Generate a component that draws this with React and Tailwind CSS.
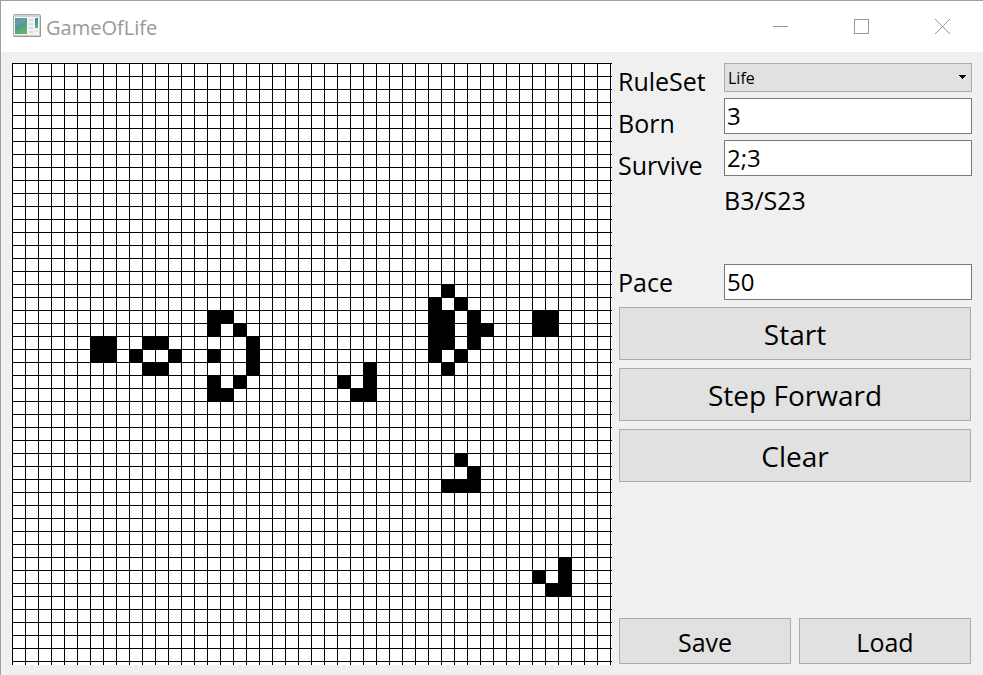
import React, { useState } from "react";

const CELL = 13;

// Live cells, listed per row as [row, [columns]].
const LIVE_ROWS = [
  [17, [33]],
  [18, [32, 34]],
  [19, [15, 16, 32, 33, 35, 40, 41]],
  [20, [15, 17, 32, 33, 35, 36, 40, 41]],
  [21, [6, 7, 10, 11, 18, 32, 33, 35]],
  [22, [6, 7, 9, 12, 15, 18, 32, 34]],
  [23, [10, 11, 18, 27, 33]],
  [24, [15, 17, 25, 27]],
  [25, [15, 16, 26, 27]],
  [30, [34]],
  [31, [35]],
  [32, [33, 34, 35]],
  [38, [42]],
  [39, [40, 42]],
  [40, [41, 42]],
];

function Board() {
  return (
    <svg
      role="img"
      aria-label="Game board"
      className="block min-w-0 flex-1 self-stretch bg-white"
      shapeRendering="crispEdges"
    >
      <defs>
        <pattern id="grid" width={CELL} height={CELL} patternUnits="userSpaceOnUse">
          <rect width={CELL} height="1" fill="#000" />
          <rect width="1" height={CELL} fill="#000" />
        </pattern>
      </defs>
      <rect width="100%" height="100%" fill="url(#grid)" />
      {LIVE_ROWS.flatMap(([row, cols]) =>
        cols.map((col) => (
          <rect
            key={`${row}-${col}`}
            x={col * CELL}
            y={row * CELL}
            width={CELL + 1}
            height={CELL + 1}
            fill="#000"
          />
        ))
      )}
    </svg>
  );
}

function AppIcon() {
  return (
    <svg className="mb-0.5" width="28" height="23" viewBox="0 0 28 23" aria-hidden="true">
      <defs>
        <linearGradient id="frame" x1="0" y1="0" x2="0" y2="1">
          <stop offset="0" stopColor="#c6c8ca" />
          <stop offset="0.18" stopColor="#dcdedf" />
          <stop offset="1" stopColor="#cfcfd1" />
        </linearGradient>
        <linearGradient id="pane" x1="0" y1="0" x2="0.5" y2="1">
          <stop offset="0" stopColor="#4a80ac" />
          <stop offset="0.5" stopColor="#509892" />
          <stop offset="1" stopColor="#68b26c" />
        </linearGradient>
      </defs>
      <rect x="0.5" y="0.5" width="27" height="22" rx="1" fill="url(#frame)" stroke="#acaeb0" />
      <path d="M1 22.5h26.5V2" fill="none" stroke="#97989a" />
      <rect x="1" y="3" width="25" height="18" fill="#f2f3f3" />
      <rect x="2" y="4" width="12" height="16" fill="url(#pane)" />
      <path d="M2 12C7 11 11 9 14 5V4H2z" fill="#fff" opacity="0.12" />
      <path d="M16 6h4M16 10h4M16 14h4M16 18h4" stroke="#dcdcde" strokeWidth="2" />
      <rect x="22" y="4" width="3" height="10" fill="url(#pane)" />
      <path d="M22 17h3" stroke="#e2e2e4" strokeWidth="2" />
    </svg>
  );
}

function CaptionButton({ label, children }) {
  return (
    <button type="button" aria-label={label} className="flex w-[81px] items-center justify-center self-stretch">
      <svg width="17" height="17" viewBox="0 0 17 17" fill="none" stroke="#999" aria-hidden="true">
        {children}
      </svg>
    </button>
  );
}

function TitleBar() {
  return (
    <header className="flex h-[51px] items-center bg-white pl-3">
      <AppIcon />
      <h1 className="ml-[5px] flex-1 pt-0.5 text-[20px] leading-[28px] text-[#999]">GameOfLife</h1>
      <CaptionButton label="Minimize">
        <path d="M1 8.5h15" />
      </CaptionButton>
      <CaptionButton label="Maximize">
        <rect x="1.5" y="1.5" width="14" height="14" />
      </CaptionButton>
      <CaptionButton label="Close">
        <path d="M1 1l15 15M16 1L1 16" />
      </CaptionButton>
    </header>
  );
}

function TextField({ id, value, onChange }) {
  return (
    <input
      id={id}
      type="text"
      value={value}
      onChange={(e) => onChange(e.target.value)}
      className="block h-[36px] w-full border border-[#7a7a7a] bg-white px-0.5 pb-0.5 text-[24px] leading-[32px] outline-none"
    />
  );
}

const BUTTON = "border border-[#adadad] bg-[#e1e1e1] pt-0.5";

export default function App() {
  const [born, setBorn] = useState("3");
  const [survive, setSurvive] = useState("2;3");
  const [pace, setPace] = useState("50");

  return (
    <div className="flex min-h-screen flex-col border-t border-l border-[#a0a0a0] bg-[#f0f0f0] font-['Segoe_UI','Open_Sans','Noto_Sans',sans-serif] text-black">
      <TitleBar />
      <main className="flex flex-1 gap-[6px] px-[11px] pt-[11px] pb-[10px]">
        <Board />
        <aside className="flex w-[354px] shrink-0 flex-col">
          <div className="flex">
            <div className="flex w-[106px] flex-col gap-[6px] text-[25px] leading-[36px]">
              <label htmlFor="ruleset">RuleSet</label>
              <label htmlFor="born">Born</label>
              <label htmlFor="survive">Survive</label>
            </div>
            <div className="flex min-w-0 flex-1 flex-col gap-[6px]">
              <div className="relative">
                <select
                  id="ruleset"
                  className="block h-[29px] w-full appearance-none border border-[#adadad] bg-[#e1e1e1] px-[3px] text-[16px] outline-none"
                >
                  <option>Life</option>
                </select>
                <svg
                  className="pointer-events-none absolute top-[12px] right-[6px]"
                  width="7"
                  height="4"
                  viewBox="0 0 7 4"
                  shapeRendering="crispEdges"
                  aria-hidden="true"
                >
                  <path d="M0 0h7v1H6v1H5v1H4v1H3V3H2V2H1V1H0z" />
                </svg>
              </div>
              <TextField id="born" value={born} onChange={setBorn} />
              <TextField id="survive" value={survive} onChange={setSurvive} />
              <output className="block text-[25px] leading-[36px]">B3/S23</output>
            </div>
          </div>
          <div className="mt-[46px] flex">
            <label htmlFor="pace" className="w-[106px] text-[25px] leading-[36px]">
              Pace
            </label>
            <div className="min-w-0 flex-1">
              <TextField id="pace" value={pace} onChange={setPace} />
            </div>
          </div>
          <div className="mx-px mt-[7px] flex flex-col gap-2 text-[28px] leading-[49px]">
            <button type="button" className={BUTTON}>Start</button>
            <button type="button" className={BUTTON}>Step Forward</button>
            <button type="button" className={BUTTON}>Clear</button>
          </div>
          <div className="mx-px mt-auto mb-px flex gap-2 text-[25px] leading-[42px]">
            <button type="button" className={`flex-1 ${BUTTON}`}>Save</button>
            <button type="button" className={`flex-1 ${BUTTON}`}>Load</button>
          </div>
        </aside>
      </main>
    </div>
  );
}
